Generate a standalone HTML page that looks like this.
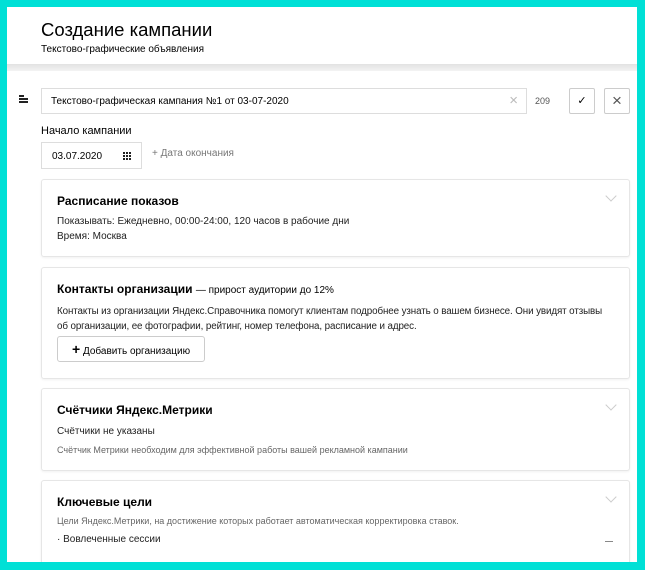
<!DOCTYPE html>
<html><head><meta charset="utf-8"><style>
*{box-sizing:border-box;margin:0;padding:0}
body{width:645px;height:570px;background:#00e0d6;font-family:"Liberation Sans",sans-serif;color:#000;overflow:hidden;position:relative}
.frame{position:absolute;left:7px;top:7px;width:630px;height:555px;background:#fff;overflow:hidden}
.abs{position:absolute}
.card{position:absolute;left:34px;width:589px;border:1px solid #e6e6e6;border-radius:3px;box-shadow:0 1px 2px rgba(0,0,0,.06);background:#fff}
.h{font-weight:bold;font-size:12px;position:absolute;left:15px}
.t{font-size:10px;position:absolute;left:15px;color:#222}
.g{color:#666}
.chev{position:absolute;right:14px;width:8px;height:8px;border-right:1px solid #ccc;border-bottom:1px solid #ccc;transform:rotate(45deg)}
</style></head><body>
<div class="frame">
 <div class="abs" style="left:34px;top:12px;font-size:18.5px">Создание кампании</div>
 <div class="abs" style="left:34px;top:37px;font-size:10px">Текстово-графические объявления</div>
 <div class="abs" style="left:0;top:57px;width:630px;height:7px;background:linear-gradient(#e2e2e2,#f3f3f3)"></div>
 <div class="abs" style="left:12px;top:88px;width:9px;height:10px">
  <div style="height:2px;background:#222;margin-bottom:1px;width:5px"></div>
  <div style="height:2px;background:#222;margin-bottom:1px"></div>
  <div style="height:2px;background:#222"></div>
 </div>
 <div class="abs" style="left:34px;top:81px;width:486px;height:26px;border:1px solid #ddd;font-size:10px;padding:7px 0 0 9px">Текстово-графическая кампания №1 от 03-07-2020
  <span style="position:absolute;right:8px;top:3px;font-size:15px;color:#bbb">×</span></div>
 <div class="abs" style="left:528px;top:89px;font-size:9px;color:#555">209</div>
 <div class="abs" style="left:562px;top:81px;width:26px;height:26px;border:1px solid #ccc;border-radius:2px;text-align:center;font-size:11px;line-height:24px">✓</div>
 <div class="abs" style="left:597px;top:81px;width:26px;height:26px;border:1px solid #ccc;border-radius:2px;text-align:center;font-size:17px;line-height:23px;color:#555">×</div>
 <div class="abs" style="left:34px;top:118px;font-size:11px">Начало кампании</div>
 <div class="abs" style="left:34px;top:135px;width:101px;height:27px;border:1px solid #ddd;font-size:10px;padding:8px 0 0 10px">03.07.2020
  <span style="position:absolute;right:9px;top:9px;width:9px;height:8px;background:repeating-linear-gradient(90deg,#222 0 2px,transparent 2px 3px),#fff;-webkit-mask:repeating-linear-gradient(#000 0 2px,transparent 2px 3px)"></span></div>
 <div class="abs" style="left:145px;top:141px;font-size:10px;color:#777">+ Дата окончания</div>

 <div class="card" style="top:172px;height:78px">
  <div class="h" style="top:14px">Расписание показов</div>
  <div class="t" style="top:36px">Показывать: Ежедневно, 00:00-24:00, 120 часов в рабочие дни</div>
  <div class="t" style="top:51px">Время: Москва</div>
  <div class="chev" style="top:12px"></div>
 </div>
 <div class="card" style="top:260px;height:112px">
  <div class="h" style="top:14px">Контакты организации <span style="font-weight:normal;font-size:10px">— прирост аудитории до 12%</span></div>
  <div class="t" style="top:36px;width:580px;line-height:15px;letter-spacing:-0.1px;font-size:9.8px;white-space:nowrap">Контакты из организации Яндекс.Справочника помогут клиентам подробнее узнать о вашем бизнесе. Они увидят отзывы<br>об организации, ее фотографии, рейтинг, номер телефона, расписание и адрес.</div>
  <div class="abs" style="left:15px;top:68px;width:148px;height:26px;border:1px solid #ccc;border-radius:3px;font-size:10px;line-height:24px;padding-left:14px"><b style="font-size:14px">+</b> Добавить организацию</div>
 </div>
 <div class="card" style="top:381px;height:83px">
  <div class="h" style="top:14px">Счётчики Яндекс.Метрики</div>
  <div class="t" style="top:37px">Счётчики не указаны</div>
  <div class="t g" style="top:56px;font-size:9px">Счётчик Метрики необходим для эффективной работы вашей рекламной кампании</div>
  <div class="chev" style="top:12px"></div>
 </div>
 <div class="card" style="top:473px;height:90px">
  <div class="h" style="top:14px">Ключевые цели</div>
  <div class="t g" style="top:35px;font-size:9px">Цели Яндекс.Метрики, на достижение которых работает автоматическая корректировка ставок.</div>
  <div class="t" style="top:53px">· Вовлеченные сессии</div>
  <div class="abs" style="right:16px;top:60px;width:8px;border-top:1px solid #888"></div>
  <div class="chev" style="top:12px"></div>
 </div>
</div>
</body></html>
